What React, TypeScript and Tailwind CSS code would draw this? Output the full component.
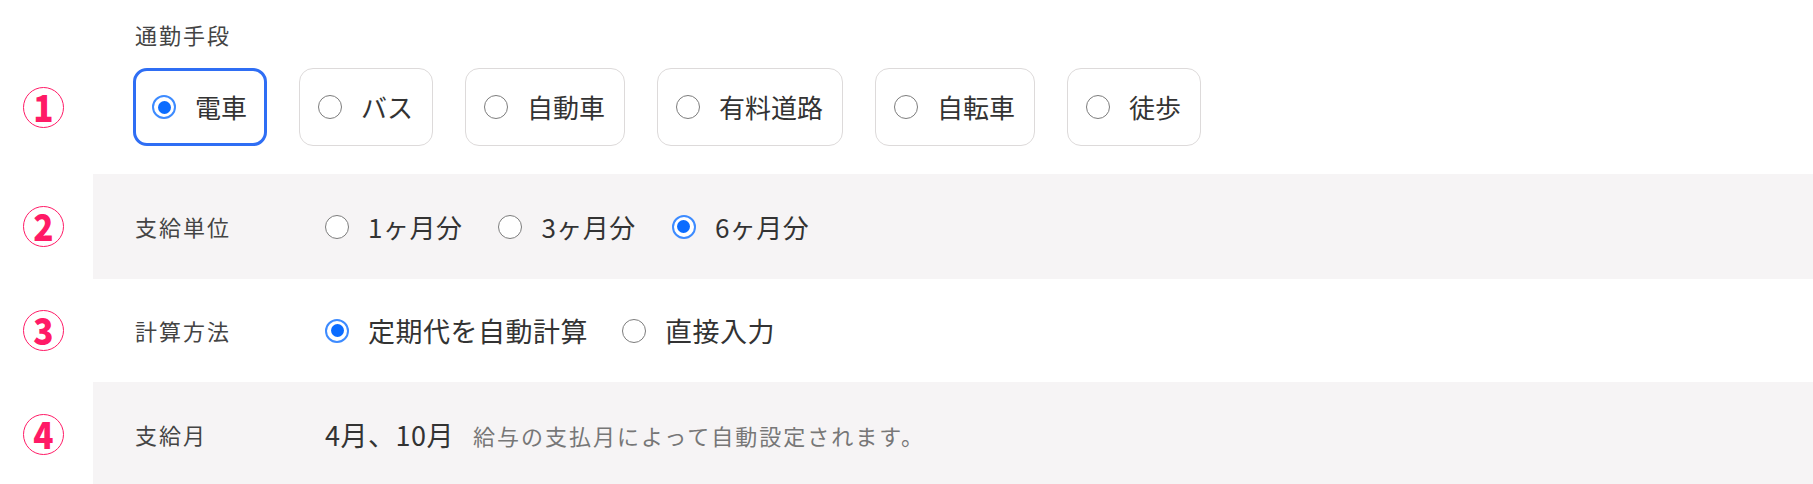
import { useState } from 'react';

const FONT = '"Noto Sans CJK JP", "Noto Sans", sans-serif';

const MODES = ['電車', 'バス', '自動車', '有料道路', '自転車', '徒歩'];
const UNITS = ['1ヶ月分', '3ヶ月分', '6ヶ月分'];
const CALC = ['定期代を自動計算', '直接入力'];

function Dot({ checked }: { checked: boolean }) {
  return checked ? (
    <span className="flex h-[24px] w-[24px] shrink-0 items-center justify-center rounded-full border-[2.5px] border-[#3d8bff] bg-white">
      <span className="h-[13px] w-[13px] rounded-full bg-[#0b6cff]" />
    </span>
  ) : (
    <span className="h-[24px] w-[24px] shrink-0 rounded-full border-[1.5px] border-[#7c7c7c] bg-white" />
  );
}

function Num({ n }: { n: number }) {
  return (
    <div className="flex h-[41px] w-[41px] items-center justify-center rounded-full border-[1.5px] border-[#ff1a66] text-[37px] font-black leading-none text-[#ff1a66]">
      <span className="-mt-[2px] scale-x-90">{n}</span>
    </div>
  );
}

function Label({ children }: { children: string }) {
  return <div className="w-[190px] shrink-0 text-[22px] tracking-[2px] text-[#444]">{children}</div>;
}

export default function App() {
  const [mode, setMode] = useState('電車');
  const [unit, setUnit] = useState('6ヶ月分');
  const [calc, setCalc] = useState('定期代を自動計算');

  return (
    <div className="min-h-[484px] w-full bg-white text-[#333]" style={{ fontFamily: FONT }}>
      {/* 通勤手段 */}
      <div className="h-[174px] pt-[19px]">
        <div className="pl-[135px] text-[22px] leading-[30px] tracking-[2px] text-[#444]">通勤手段</div>
        <div className="mt-[19px] flex items-center">
          <div className="w-[93px] shrink-0 pl-[23px]">
            <Num n={1} />
          </div>
          <div className="flex gap-[32px] pl-[40px]">
            {MODES.map((m) => {
              const on = m === mode;
              return (
                <button
                  key={m}
                  onClick={() => setMode(m)}
                  className={
                    on
                      ? 'flex h-[78px] items-center gap-[19px] rounded-[14px] border-[3px] border-[#2f6ef4] bg-white pl-[16px] pr-[17px]'
                      : 'flex h-[78px] items-center gap-[19px] rounded-[14px] border border-[#dddada] bg-white pl-[18px] pr-[19px]'
                  }
                >
                  <Dot checked={on} />
                  <span className="text-[26px] leading-none text-[#333]">{m}</span>
                </button>
              );
            })}
          </div>
        </div>
      </div>

      {/* 支給単位 */}
      <div className="flex h-[105px]">
        <div className="flex w-[93px] shrink-0 items-center pl-[23px]">
          <Num n={2} />
        </div>
        <div className="flex flex-1 items-center bg-[#f6f4f5] pl-[42px]">
          <Label>支給単位</Label>
          <div className="flex gap-[36px]">
            {UNITS.map((u) => (
              <button key={u} onClick={() => setUnit(u)} className="flex items-center gap-[19px]">
                <Dot checked={u === unit} />
                <span className="text-[26px] leading-none tracking-[0.5px]">{u}</span>
              </button>
            ))}
          </div>
        </div>
      </div>

      {/* 計算方法 */}
      <div className="flex h-[103px]">
        <div className="flex w-[93px] shrink-0 items-center pl-[23px]">
          <Num n={3} />
        </div>
        <div className="flex flex-1 items-center pl-[42px]">
          <Label>計算方法</Label>
          <div className="flex gap-[34px]">
            {CALC.map((c) => (
              <button key={c} onClick={() => setCalc(c)} className="flex items-center gap-[19px]">
                <Dot checked={c === calc} />
                <span className="text-[27px] leading-none tracking-[0.5px]">{c}</span>
              </button>
            ))}
          </div>
        </div>
      </div>

      {/* 支給月 */}
      <div className="flex h-[105px]">
        <div className="flex w-[93px] shrink-0 items-center pl-[23px]">
          <Num n={4} />
        </div>
        <div className="flex flex-1 items-center bg-[#f6f4f5] pl-[42px]">
          <Label>支給月</Label>
          <span className="text-[27px] leading-none tracking-[0.5px]">4月、10月</span>
          <span className="ml-[19px] text-[22px] leading-none tracking-[2px] text-[#777]">
            給与の支払月によって自動設定されます。
          </span>
        </div>
      </div>
    </div>
  );
}
